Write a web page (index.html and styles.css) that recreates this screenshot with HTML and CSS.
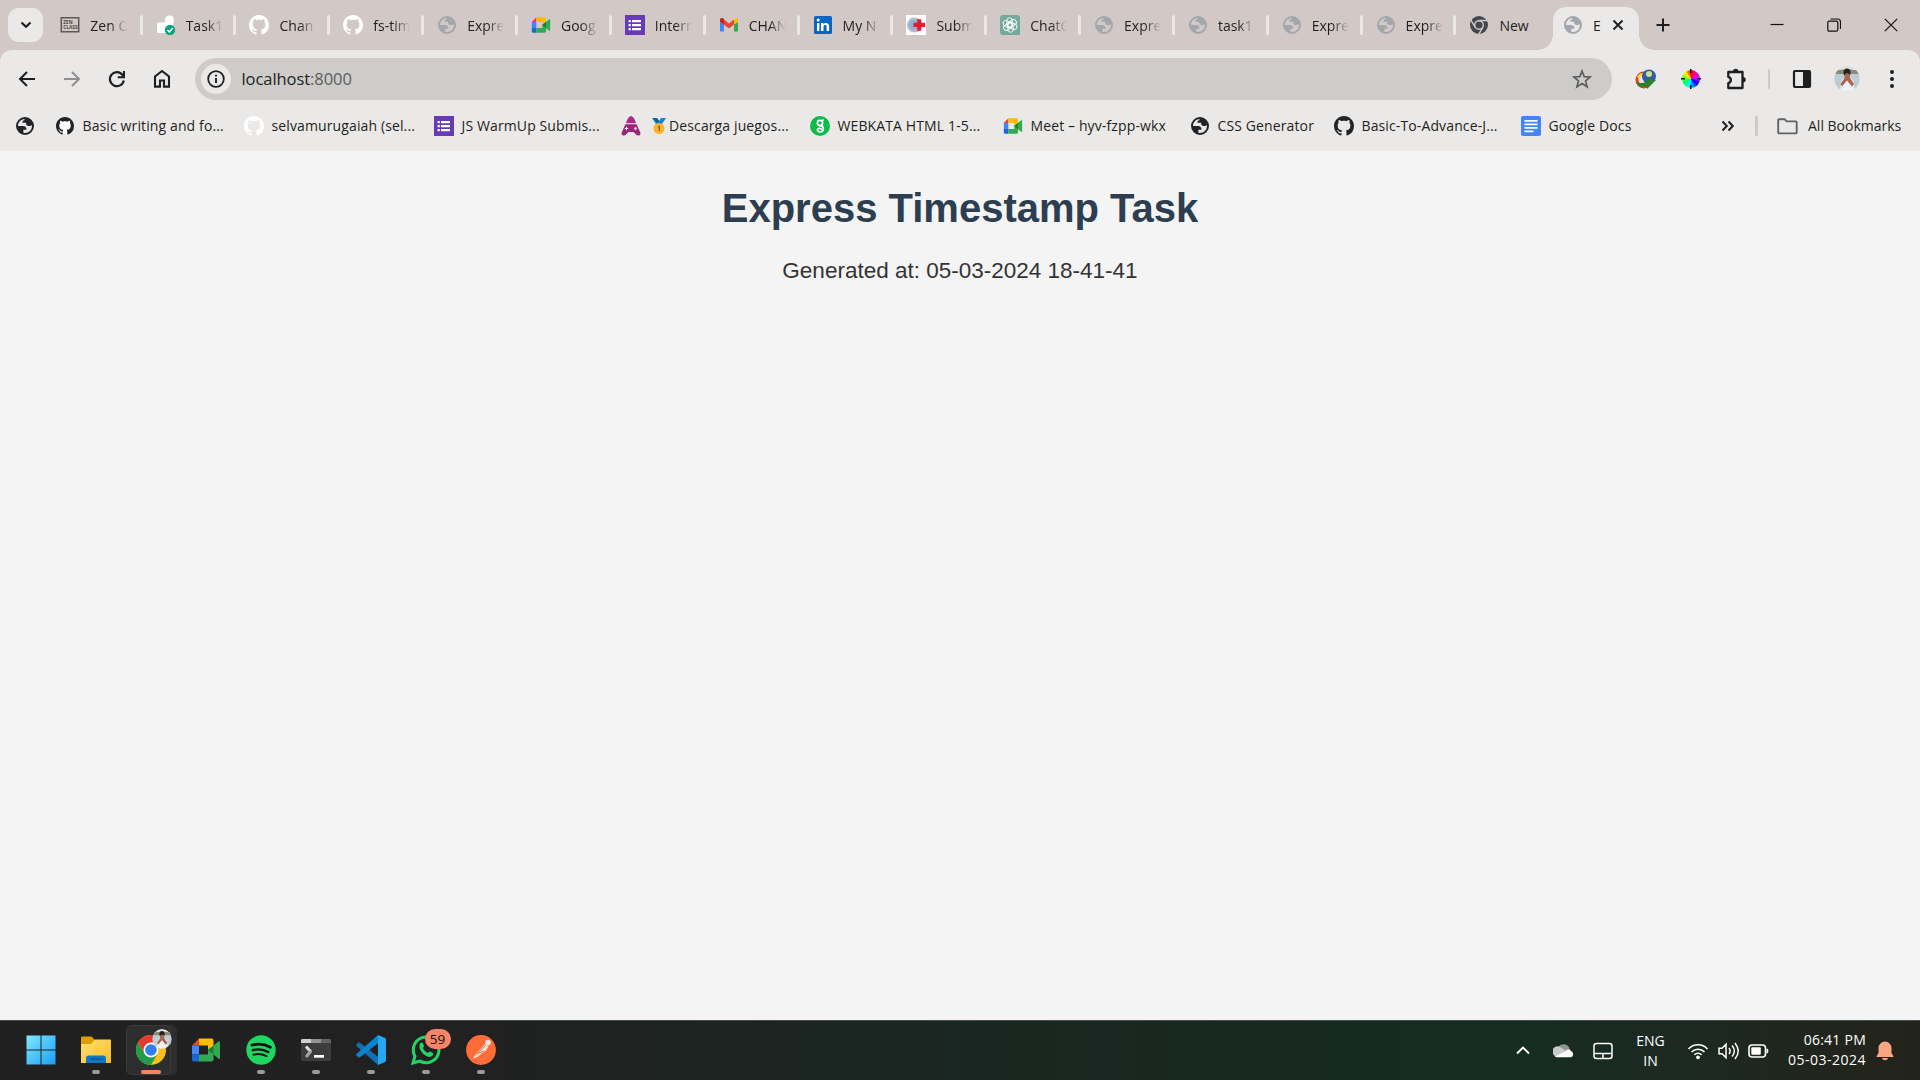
FILE: index.html
```html
<!DOCTYPE html>
<html lang="en">
<head>
<meta charset="utf-8">
<title>Express Timestamp Task</title>
<link rel="stylesheet" href="styles.css">
</head>
<body>
<svg class="defs" width="0" height="0" aria-hidden="true">
  <defs>
    <symbol id="globe" viewBox="0 0 16 16"><path fill="currentColor" fill-rule="evenodd" d="M8 .8a7.2 7.2 0 1 0 0 14.4A7.2 7.2 0 0 0 8 .8zM2.4 8h3.9c1.9 0 2.9 1 2.9 2.9H6.7v2.5c.4.1.9.2 1.3.2A5.6 5.6 0 0 0 13.6 8c0-.3 0-.6-.1-.9-.4.6-1 .9-1.900.9-1.900 0-2.800-.900-2.800-2.700H6c-.1-1.300.4-1.900 1.600-1.900V2.400C4.800 2.600 2.400 5 2.400 8z"/></symbol>
    <symbol id="github" viewBox="0 0 16 16"><path fill="currentColor" d="M8 0C3.58 0 0 3.58 0 8c0 3.54 2.29 6.53 5.47 7.59.4.07.55-.17.55-.38 0-.19-.01-.82-.01-1.49-2.01.37-2.53-.49-2.69-.94-.09-.23-.48-.94-.82-1.13-.28-.15-.68-.52-.01-.53.63-.01 1.08.58 1.23.82.72 1.21 1.87.87 2.33.66.07-.52.28-.87.51-1.07-1.78-.2-3.64-.89-3.64-3.95 0-.87.31-1.59.82-2.15-.08-.2-.36-1.02.08-2.12 0 0 .67-.21 2.2.82.64-.18 1.32-.27 2-.27.68 0 1.36.09 2 .27 1.53-1.04 2.2-.82 2.2-.82.44 1.1.16 1.92.08 2.12.51.56.82 1.27.82 2.15 0 3.07-1.87 3.75-3.65 3.95.29.25.54.73.54 1.48 0 1.07-.01 1.93-.01 2.2 0 .21.15.46.55.38A8.013 8.013 0 0 0 16 8c0-4.42-3.58-8-8-8z"/></symbol>
    <symbol id="meet" viewBox="0 0 28 24"><path fill="#ea4335" d="M0 7.500 7 .5v7z"/><path fill="#fbbc04" d="M7 .5h12.500a2 2 0 0 1 2 2V9l-5.500 4V7.500H7z"/><path fill="#4285f4" d="M0 7.500h7v9H0z"/><path fill="#1967d2" d="M0 16.500h7v7H2a2 2 0 0 1-2-2z"/><path fill="#34a853" d="M7 16.500h9V11l5.500 1v9.500a2 2 0 0 1-2 2H7zM16 12l10.300-8.500c.8-.6 1.700-.2 1.700.8v15.400c0 1-.9 1.400-1.700.8z"/><path fill="#188038" d="m16 12 5.500-4.600v9.200z"/></symbol>
    <symbol id="forms" viewBox="0 0 20 20"><path fill="#673ab7" d="M0 0h20v20H0z"/><path fill="#fff" d="M7 5h9v2.200H7zM7 9h9v2.200H7zM7 13h9v2.200H7zM3.600 5h2.200v2.200H3.600zM3.600 9h2.200v2.200H3.600zM3.600 13h2.200v2.200H3.600z"/></symbol>
    <symbol id="avatar" viewBox="0 0 26 26"><clipPath id="round"><circle cx="13" cy="13" r="12.600"/></clipPath><g clip-path="url(#round)"><path fill="#bccdd3" d="M0 0h26v26H0z"/><path fill="#dfe5e6" d="M0 0h26v5H0z"/><path fill="#8b8b78" d="M0 5c7-2 19-2 26 0v3H0z"/><path fill="#eef0f6" d="M6 26 7.500 14l4-3h4l4 4L21 26z"/><ellipse cx="13" cy="6.500" rx="3.500" ry="4" fill="#26211f"/><path fill="#a8664e" d="m11 8 2-1 2.500 1 .5 4 4 6-2 2.500-5-6-5 6L6.500 18l4-6z"/></g></symbol>
  </defs>
</svg>

<header class="browser">
  <div class="tabstrip">
    <button class="tab-search"><svg width="12" height="8" viewBox="0 0 12 8"><path d="m1.500 1.500 4.500 4.300 4.500-4.300" fill="none" stroke="#1d1f21" stroke-width="2.200"/></svg></button>
    <div class="tabs">
      <div class="tab first"><svg class="fav" viewBox="0 0 20 20"><path d="M1.300 2.800h17.400v14H1.300z" fill="none" stroke="#5c5858" stroke-width="1.500"/><text x="3.200" y="8.800" class="zen">ZEN</text><text x="3.200" y="14" class="zen">CLASS</text></svg><span>Zen C</span></div>
      <div class="tab"><svg class="fav" viewBox="0 0 20 20"><path fill="#fff" d="M1 9c0-1 .5-1.500 1.500-1.500H9V4l1-2 2-1.500h3l2.500 2L18 6l-1 3v9H1z"/><circle cx="14" cy="15" r="5.200" fill="#0aa37f"/><path d="m11.300 15 2 2 3.600-4" fill="none" stroke="#fff" stroke-width="1.500"/></svg><span>Task1</span></div>
      <div class="tab white"><svg class="fav"><use href="#github"/></svg><span>Chan</span></div>
      <div class="tab white"><svg class="fav"><use href="#github"/></svg><span>fs-tim</span></div>
      <div class="tab"><svg class="fav"><use href="#globe"/></svg><span>Expre</span></div>
      <div class="tab"><svg class="fav" viewBox="0 0 20 20"><use href="#meet" x=".5" y="2" width="19" height="16"/></svg><span>Goog</span></div>
      <div class="tab"><svg class="fav"><use href="#forms"/></svg><span>Intern</span></div>
      <div class="tab"><svg class="fav" viewBox="0 0 20 20"><path fill="#4285f4" d="M1 7v9.500h4V9.300z"/><path fill="#34a853" d="M15 9.300v7.200h4V7z"/><path fill="#ea4335" d="M1 4.500 3 3l7 5.500L15 4.500v5l-5 4-9-6.800z"/><path fill="#c5221f" d="M1 5c0-2 2-2.700 4-1v5.300L1 6.800z"/><path fill="#fbbc04" d="M15 4.500c2-2 4-1.500 4 .5v1.800l-4 2.900z"/></svg><span>CHAN</span></div>
      <div class="tab"><svg class="fav" viewBox="0 0 20 20"><rect x="1" y="1" width="18" height="18" rx="1.500" fill="#0a66c2"/><path fill="#fff" d="M4 8h2.400v8H4zM8 8h2.400v1.200c1.500-2.200 5.700-1.700 5.700 2V16h-2.500v-4.300c0-2.300-3.100-2.300-3.100 0V16H8z"/><circle cx="5.200" cy="5" r="1.500" fill="#fff"/></svg><span>My N</span></div>
      <div class="tab"><svg class="fav" viewBox="0 0 20 20"><path fill="#fff" d="M0 0h20v20H0z"/><circle cx="8.500" cy="10" r="6.500" fill="#82b8d8" stroke="#b8bcc1" stroke-width="2.200"/><path fill="#e31b2f" d="M11.200 4.200h4v3.600H19V12h-3.800v3.700h-4V12H7.500V7.800h3.700z"/></svg><span>Subm</span></div>
      <div class="tab"><svg class="fav" viewBox="0 0 20 20"><path fill="#74aa9c" d="M3 0h14a3 3 0 0 1 3 3v17H3a3 3 0 0 1-3-3V3a3 3 0 0 1 3-3z"/><g fill="none" stroke="#fff" stroke-width=".9"><rect id="petal" x="6.800" y="2.800" width="5.400" height="9.500" rx="2.700"/><use href="#petal" transform="rotate(60 10 10)"/><use href="#petal" transform="rotate(120 10 10)"/><use href="#petal" transform="rotate(180 10 10)"/><use href="#petal" transform="rotate(240 10 10)"/><use href="#petal" transform="rotate(300 10 10)"/></g></svg><span>ChatG</span></div>
      <div class="tab"><svg class="fav"><use href="#globe"/></svg><span>Expre</span></div>
      <div class="tab"><svg class="fav"><use href="#globe"/></svg><span>task1</span></div>
      <div class="tab"><svg class="fav"><use href="#globe"/></svg><span>Expre</span></div>
      <div class="tab"><svg class="fav"><use href="#globe"/></svg><span>Expre</span></div>
      <div class="tab last"><svg class="fav" viewBox="0 0 20 20"><circle cx="10" cy="10" r="9" fill="#41474c"/><g stroke="#d2c9c6" stroke-width="1.400" fill="none"><path d="M10 5.500h9M6.100 12.200 1.600 4.500M13.900 12.200l-4.400 7.500"/><circle cx="10" cy="10" r="4.300"/></g></svg><span>New</span></div>
      <div class="tab active"><svg class="fav"><use href="#globe"/></svg><span>E</span><svg class="close" width="12" height="12" viewBox="0 0 12 12"><path d="m1.500 1.500 9 9m0-9-9 9" stroke="#1d1f21" stroke-width="1.900"/></svg></div>
    </div>
    <svg class="new-tab" width="14" height="14" viewBox="0 0 14 14"><path d="M7 .5v13M.5 7h13" stroke="#1d1f21" stroke-width="2"/></svg>
    <div class="window-buttons">
      <svg width="14" height="14" viewBox="0 0 14 14"><path d="M.5 6.500h13" stroke="#111" stroke-width="1.200"/></svg>
      <svg width="14" height="14" viewBox="0 0 14 14"><g fill="none" stroke="#111" stroke-width="1.200"><rect x=".8" y="3.200" width="10" height="10" rx="1.500"/><path d="M3.500 1h7a3 3 0 0 1 3 3v7"/></g></svg>
      <svg width="14" height="14" viewBox="0 0 14 14"><path d="m.8.8 12.400 12.400m0-12.400L.8 13.200" stroke="#111" stroke-width="1.200"/></svg>
    </div>
  </div>

  <div class="toolbar">
    <div class="nav">
      <svg viewBox="0 0 20 20"><path d="M18 10H3.500M10 3l-7 7 7 7" fill="none" stroke="#1d1f21" stroke-width="2"/></svg>
      <svg viewBox="0 0 20 20"><path d="M2 10h14.500M10 3l7 7-7 7" fill="none" stroke="#919090" stroke-width="2"/></svg>
      <svg viewBox="0 0 20 20"><path d="M16.800 11.500A7 7 0 1 1 15.600 6L17 7.500" fill="none" stroke="#1d1f21" stroke-width="2.200"/><path d="M17 2v6.300h-6.300" fill="none" stroke="#1d1f21" stroke-width="2"/></svg>
      <svg viewBox="0 0 20 20"><path d="M3 17.600V7.500L10 2l7 5.500v10.100h-5V11.500H8v6.100z" fill="none" stroke="#1d1f21" stroke-width="2.100"/></svg>
    </div>
    <div class="omnibox">
      <span class="site-info"><svg width="18" height="18" viewBox="0 0 18 18"><circle cx="9" cy="9" r="7.800" fill="none" stroke="#1d1f21" stroke-width="1.800"/><path d="M9 8v5M9 4.800v1.800" stroke="#1d1f21" stroke-width="1.900"/></svg></span>
      <span class="url">localhost<span>:8000</span></span>
      <svg class="star" width="20" height="20" viewBox="0 0 20 20"><path d="m10 2 2.200 5.600 6 .4-4.600 3.900 1.500 5.900L10 14.500l-5.100 3.300 1.500-5.900L1.800 8l6-.4z" fill="none" stroke="#5f5f5f" stroke-width="1.700"/></svg>
    </div>
    <div class="extensions">
      <svg width="22" height="20" viewBox="0 0 22 20"><circle cx="9" cy="11" r="7" fill="none" stroke="#e33d22" stroke-width="3"/><path d="M3 8c3-5 8-3 9 0M3 9c2-4 6-3 7 1" fill="none" stroke="#f8d83d" stroke-width="2"/><circle cx="14" cy="7.500" r="7" fill="#315f9f"/><circle cx="14" cy="5" r="3" fill="#d4dc92"/><path fill="#278526" d="M1 13c5 2 10 1 12-2l-1-1 9 1-9 9v-3c-5 2-9 1-11-4z"/></svg>
      <span class="wheel"><i></i></span>
      <svg width="22" height="22" viewBox="0 0 22 22"><path fill="none" stroke="#1d1f21" stroke-width="2.300" stroke-linejoin="round" d="M3.300 4h14.200v16H3.300v-4.800c3.400-1 3.400-5.400 0-6.400z"/><path fill="#1d1f21" d="M8 3.500a2.700 2.700 0 0 1 5.400 0zM18 9a2.700 2.700 0 0 1 0 5.400z"/></svg>
      <i class="rule"></i>
      <svg width="20" height="20" viewBox="0 0 20 20"><rect x="2" y="2" width="16" height="16" rx="1" fill="none" stroke="#1d1f21" stroke-width="2.200"/><path fill="#1d1f21" d="M11 2h7v16h-7z"/></svg>
      <svg width="26" height="26"><use href="#avatar"/></svg>
      <svg width="6" height="20" viewBox="0 0 6 20" fill="#1d1f21"><circle cx="3" cy="3" r="2"/><circle cx="3" cy="10" r="2"/><circle cx="3" cy="17" r="2"/></svg>
    </div>
  </div>

  <nav class="bookmarks">
    <a class="dark"><svg class="fav"><use href="#globe"/></svg></a>
    <a class="dark"><svg class="fav" viewBox="0 0 20 20"><circle cx="10" cy="10" r="8.500" fill="#fff"/><use href="#github" x="1" y="1" width="18" height="18"/></svg><span>Basic writing and fo...</span></a>
    <a class="white"><svg class="fav"><use href="#github"/></svg><span>selvamurugaiah (sel...</span></a>
    <a><svg class="fav"><use href="#forms"/></svg><span>JS WarmUp Submis...</span></a>
    <a><svg class="fav" viewBox="0 0 20 20"><path fill="#b3278c" d="M5 7.500C6 3 8 .3 10 .3s4 2.700 5 7.200z"/><path fill="#9e2379" d="M4.500 8h11L19.500 17c0 3-3 3.300-4.500 1.500L12.500 16h-5L5 18.500C3.500 20.300.5 20 .5 17z"/><path fill="#fff" d="M4.500 7.400h11v.9h-11zM5 10.800h1v3.500H5zM3.800 12h3.500v1H3.800z"/><circle cx="14.500" cy="12.500" r="1.300" fill="#fff"/></svg><svg class="medal" width="16" height="18" viewBox="0 0 16 18"><path fill="#1786c8" d="M1 1h5l2 3 2-3h5l-4 6H5z"/><path fill="#0e5f9b" d="m6 1 2 3-2 2-4-5z"/><circle cx="8" cy="11.500" r="5.500" fill="#fbb42c"/><path d="M7 10.500 8.300 9.500V14" fill="none" stroke="#8c5a16" stroke-width="1.300"/></svg><span>Descarga juegos...</span></a>
    <a><svg class="fav" viewBox="0 0 20 20"><circle cx="10" cy="10" r="10" fill="#10b94c"/><g fill="none" stroke="#fff" stroke-width="1.700"><circle cx="10" cy="7" r="2.600"/><path d="M10 9.700c4.500 0 4.300 6.300.3 6.300-3.300 0-3.800-3.300-1.300-3.700 2-.3 2.500 1 1.700 1.600M12 5l1.500-1.500"/></g></svg><span>WEBKATA HTML 1-5...</span></a>
    <a><svg class="fav" viewBox="0 0 20 20"><use href="#meet" x=".5" y="2" width="19" height="16"/></svg><span>Meet – hyv-fzpp-wkx</span></a>
    <a class="dark"><svg class="fav"><use href="#globe"/></svg><span>CSS Generator</span></a>
    <a class="dark"><svg class="fav"><use href="#github"/></svg><span>Basic-To-Advance-J...</span></a>
    <a><svg class="fav" viewBox="0 0 20 20"><rect width="20" height="20" rx="2" fill="#4285f4"/><path fill="#fff" d="M3.500 4h13v1.800h-13zM3.500 7.500h13v1.800h-13zM3.500 11h13v1.800h-13zM3.500 14.500h9v1.800h-9z"/></svg><span>Google Docs</span></a>
    <svg width="14" height="12" viewBox="0 0 14 12"><path d="m1.500 1.500 4.300 4.500-4.300 4.500M7.500 1.500 11.800 6l-4.300 4.500" fill="none" stroke="#1d1f21" stroke-width="2"/></svg>
    <i class="rule"></i>
    <a class="all"><svg width="21" height="17" viewBox="0 0 21 17"><path d="M1.200 2.200c0-.6.400-1 1-1h5.300l2.200 2.200h9c.6 0 1 .4 1 1v10c0 .6-.4 1-1 1H2.200c-.6 0-1-.4-1-1z" fill="none" stroke="#5f6368" stroke-width="1.900"/></svg><span>All Bookmarks</span></a>
  </nav>
</header>

<main class="page">
  <h1>Express Timestamp Task</h1>
  <p>Generated at: 05-03-2024 18-41-41</p>
</main>

<footer class="taskbar">
  <div class="apps">
    <div class="app start"><svg viewBox="0 0 30 30"><defs><linearGradient id="win" x2="1" y2="1"><stop stop-color="#7eeaff"/><stop offset="1" stop-color="#1a9df5"/></linearGradient></defs><path fill="url(#win)" d="M.5.500h14v14H.5zM15.500.500h14v14h-14zM.5 15.500h14v14H.5zM15.500 15.500h14v14h-14z"/></svg></div>
    <div class="app open"><svg viewBox="0 0 30 30"><defs><linearGradient id="fold" x2="1" y2="1"><stop stop-color="#ffe071"/><stop offset="1" stop-color="#f9bd26"/></linearGradient></defs><path fill="#dd9d08" d="M0 3c0-1 .5-1.500 1.500-1.500h9L14 5v6H0z"/><path fill="url(#fold)" d="M0 9h10l4-4.500h15c.7 0 1 .3 1 1V28H0z"/><path fill="#0f77c4" d="M5 28v-5a2.500 2.500 0 0 1 2.500-2.500h15A2.500 2.500 0 0 1 25 23v5z"/><path d="M9 24h13" stroke="#084b82"/></svg></div>
    <div class="app open current"><i class="stack"></i><svg viewBox="0 0 30 30"><circle cx="15" cy="15" r="15" fill="#fbc116"/><path fill="#e33b2e" d="M2 7.500A15 15 0 0 1 28 7.500H15L8.500 18.800z"/><path fill="#239b4c" d="M2 7.500A15 15 0 0 0 15 30l6.500-11.200L15 22l-6.500-3.300z"/><circle cx="15" cy="15" r="7.500" fill="#fff"/><circle cx="15" cy="15" r="5.800" fill="#2f80ee"/></svg><svg class="profile" viewBox="0 0 26 26"><use href="#avatar" width="26" height="26"/></svg></div>
    <div class="app"><svg viewBox="0 0 30 30"><use href="#meet" x="1" y="3" width="28" height="24"/></svg></div>
    <div class="app open"><svg viewBox="0 0 30 30"><circle cx="15" cy="15" r="14.700" fill="#1ed760"/><g fill="none" stroke="#111" stroke-linecap="round"><path d="M6 10.200c6-1.700 13-1 18.300 2" stroke-width="2.800"/><path d="M6.800 15.200c5-1.500 11-.8 15.500 1.800" stroke-width="2.300"/><path d="M7.500 19.700c4.500-1.200 9-.6 13 1.500" stroke-width="1.900"/></g></svg></div>
    <div class="app open"><svg viewBox="0 0 30 30"><path fill="#3b3d3f" d="M0 8h30v16.500c0 .8-.7 1.500-1.500 1.500h-27C.7 26 0 25.300 0 24.500z"/><path fill="#d0d0d0" d="M1.500 4H10v4H0V5.500C0 4.700.7 4 1.500 4z"/><path fill="#929292" d="M10 4h10v4H10z"/><path fill="#656565" d="M20 4h8.500c.8 0 1.500.7 1.500 1.500V8H20z"/><path d="m5 11.500 5 5.500" stroke="#e0e0e0" stroke-width="3"/><path d="m10 16-5 6" stroke="#a5a5a5" stroke-width="3"/><path fill="#fff" d="M13 20h10v2.700H13z"/></svg></div>
    <div class="app open"><svg viewBox="0 0 30 30"><path fill="#0f70b7" d="M2.300 7.700.7 9.200c-.7.6-.7 1.300 0 2L22 30v-8.200L3.800 7.700c-.5-.4-1-.4-1.500 0z"/><path fill="#0c85d1" d="m2.300 22.300-1.600-1.500c-.7-.6-.7-1.300 0-2L22 0v8.200L3.800 22.300c-.5.4-1 .4-1.500 0z"/><path fill="#27a6f1" d="M22 0 28.500 2.800c1 .4 1.500 1 1.500 2v20.400c0 1-.5 1.600-1.500 2L22 30z"/></svg></div>
    <div class="app open"><svg viewBox="0 0 30 30"><path d="M2 28 4 21.200a12.800 12.800 0 1 1 5 4.900z" fill="none" stroke="#24d366" stroke-width="3"/><path fill="#24d366" d="M9 8.500c1-1.500 2.500-1.500 3 0l1 2.500c0 1-1.200 1.700-1 2.300 1 2 2.500 3.500 4.700 4.500.8.200 1.500-1.500 2.300-1.400l3 1.500c.7.500 0 4-4 4C12 21 6.500 13 9 8.500z"/></svg><b class="badge">59</b></div>
    <div class="app open"><svg viewBox="0 0 30 30"><circle cx="15" cy="15" r="14.900" fill="#ff6c37"/><circle cx="22" cy="7.600" r="2.800" fill="#f7e5de"/><path fill="#f9ddd2" d="m19 9 3.500 2.500-2.500 4-5 3.500-3.500 3-5 2 4-5.500z"/><path d="m20 10-9 9 7-3" fill="none" stroke="#d36a48" stroke-width=".8"/></svg></div>
  </div>
  <div class="tray">
    <svg width="14" height="9" viewBox="0 0 14 9"><path d="m1 7.500 6-6 6 6" fill="none" stroke="#fff" stroke-width="1.900"/></svg>
    <svg width="21" height="15" viewBox="0 0 21 15"><path fill="#8d9692" d="M5 8a6 6 0 0 1 11-4l1 4-8 3z"/><path fill="#c6cac8" d="M1 12a5 5 0 0 1 7-7.300L17 10l-7 4H4c-1.500 0-2.500-.8-3-2z"/><path fill="#fff" d="M2 13.200 13 8c1-2 4-2 5 0a3.400 3.400 0 0 1 0 6.300H4c-.800 0-1.500-.4-2-1.100z"/></svg>
    <svg width="20" height="18" viewBox="0 0 20 18"><g fill="none" stroke="#fff" stroke-width="1.500"><rect x="1" y="1.500" width="18" height="15" rx="2.500"/><path d="M1 11.500h18M10 11.500v5"/></g></svg>
    <div class="lang"><span>ENG</span><span>IN</span></div>
    <svg width="22" height="18" viewBox="0 0 22 18"><g fill="none" stroke="#fff" stroke-width="1.500"><path d="M1.500 7a13 13 0 0 1 19 0M4.500 10a9 9 0 0 1 13 0M7.300 12.800a5.200 5.200 0 0 1 7.400 0"/></g><circle cx="11" cy="15.300" r="1.900" fill="#fff"/></svg>
    <svg width="21" height="18" viewBox="0 0 21 18"><g fill="none" stroke="#fff" stroke-width="1.500"><path d="M1 6.200h3l4-4v13.600l-4-4H1zM11 6c1.500 2 1.500 4 0 6M14 3.500c3 3.500 3 7.500 0 11M17 1c4 5 4 11 0 16"/></g></svg>
    <svg width="21" height="14" viewBox="0 0 21 14"><rect x="1" y="1" width="16.500" height="12" rx="3" fill="none" stroke="#fff" stroke-width="1.600"/><rect x="3.300" y="3.300" width="9.500" height="7.400" rx="1" fill="#fff"/><path fill="#fff" d="M18.500 4.500c2.500 0 2.500 5 0 5z"/></svg>
    <div class="clock"><span class="time">06:41 PM</span><span class="date">05-03-2024</span></div>
    <svg width="18" height="20" viewBox="0 0 18 20"><path fill="#fba583" d="M2.500 7a6.500 6.500 0 0 1 13 0v5l1.800 3c.3.600 0 1-.6 1H1.300c-.6 0-.9-.4-.6-1l1.800-3zM6 17h6c-.5 3-5.500 3-6 0z"/></svg>
  </div>
</footer>
</body>
</html>
```
FILE: styles.css
```css
* { box-sizing: border-box; }

body {
  margin: 0;
  height: 1080px;
  display: flex;
  flex-direction: column;
  overflow: hidden;
  background: #f4f4f4;
  color: #1d1f21;
  font: 14px "Open Sans", "Noto Sans", sans-serif;
}

svg { display: block; flex: none; }
.defs { position: absolute; }
.fav { width: 20px; height: 20px; }
.dark { color: #202327; }
.white { color: #fff; }
.zen { font-size: 4.800px; font-weight: 700; fill: #4a4646; }

.browser { height: 151px; background: #d2c9c6; }

/* Tab strip */
.tabstrip { height: 50px; display: flex; align-items: center; padding-left: 8px; }
.tab-search {
  width: 35px; height: 34px; padding: 0; border: 0; border-radius: 11px;
  background: #ebe9e7; display: grid; place-items: center;
}
.tabs { display: flex; align-items: flex-end; height: 50px; margin-left: 5.800px; }
.tab {
  display: flex; align-items: center; height: 50px; width: 93.850px;
  padding-left: 13px; gap: 10px; color: #a1a7ad; position: relative;
}
.tab.first { padding-left: 11.500px; }
.tab.white { color: #fff; }
.tab span {
  flex: none; width: 37px; overflow: hidden; white-space: nowrap; color: #1d1f21;
  -webkit-mask-image: linear-gradient(90deg, #000 55%, transparent);
  mask-image: linear-gradient(90deg, #000 55%, transparent);
}
.tab::after {
  content: ""; width: 3px; height: 20px; border-radius: 2px;
  background: #ebe9e7; margin-left: auto;
}
.tab.last { width: 96.500px; }
.tab.last span { -webkit-mask-image: none; mask-image: none; }
.tab.last::after { display: none; }
.tab.active {
  width: 86px; height: 43px; padding: 0 0 7px 10px; border-radius: 13px 13px 0 0;
  background: #ebe9e7;
}
.tab.active span { width: 8px; margin-right: 3px; -webkit-mask-image: none; mask-image: none; }
.tab.active .close { margin-left: -1.500px; }
.tab.active::before, .tab.active::after {
  content: ""; position: absolute; bottom: 0; width: 15px; height: 15px;
  border-radius: 0; margin: 0;
}
.tab.active::before { left: -15px; background: radial-gradient(circle at 0 0, transparent 14.500px, #ebe9e7 15px); }
.tab.active::after { right: -15px; background: radial-gradient(circle at 100% 0, transparent 14.500px, #ebe9e7 15px); }
.new-tab { margin-left: 17px; }
.window-buttons { display: flex; gap: 43px; margin: 0 22px 0 auto; }

/* Toolbar */
.toolbar {
  height: 51px; display: flex; align-items: center; padding-top: 7px;
  background: #ebe9e7; border-radius: 12px 12px 0 0;
}
.nav { display: flex; gap: 25px; padding-left: 17px; width: 195px; }
.nav svg { width: 20px; height: 20px; }
.omnibox {
  width: 1417px; height: 42px; border-radius: 21px; background: #cdccca;
  display: flex; align-items: center; padding: 0 20px 0 6px;
}
.site-info {
  width: 30px; height: 30px; border-radius: 50%; background: #ebe9e7;
  display: grid; place-items: center;
}
.url { margin-left: 10.500px; font-size: 16.500px; letter-spacing: -.06px; padding-bottom: 1px; }
.url span { color: #5d5d5d; }
.star { margin-left: auto; }
.extensions {
  flex: 1; display: grid; justify-items: center; align-items: center;
  grid-template-columns: 45px 45px 45px 21px 45px 46px 44px; padding-left: 11px;
}
.wheel {
  width: 18px; height: 18px; border-radius: 50%; display: flex; align-items: center; justify-content: center;
  background: conic-gradient(red, #ff0080 8%, #c0f 22%, #00f 35%, #08f 45%, #0ff 55%, #0f6 68%, #8f0 80%, #ff0 88%, #f60 95%, red);
}
.wheel i {
  flex: none; width: 20px; height: 20px;
  background:
    linear-gradient(#111, #111) 50% 0 / 1.500px 4px,
    linear-gradient(#111, #111) 50% 100% / 1.500px 4px,
    linear-gradient(#111, #111) 0 50% / 4px 1.500px,
    linear-gradient(#111, #111) 100% 50% / 4px 1.500px;
  background-repeat: no-repeat;
}
.rule { width: 2px; height: 20px; background: #d2c9c6; border-radius: 1px; }

/* Bookmarks */
.bookmarks {
  height: 50px; background: #ebe9e7; display: grid; align-items: center;
  padding-left: 15px;
  grid-template-columns: 40px 189px 190px 187px 189px 193px 187px 144px 187px 200px 34px 22px auto;
}
.bookmarks a { display: flex; align-items: center; gap: 7.500px; }
.bookmarks span { color: #1d1f21; white-space: nowrap; letter-spacing: .12px; padding-bottom: 2px; }
.bookmarks .medal { margin: 0 -5px 0 2px; }
.bookmarks .rule { width: 3px; }
.bookmarks .all { gap: 10px; }
.bookmarks .all span { letter-spacing: 0; }

/* Page content */
.page { flex: 1; text-align: center; font-family: "Liberation Sans", Arial, sans-serif; padding-top: 34px; }
h1 { margin: 0; font-size: 40px; line-height: 46px; color: #2c3e50; }
p { margin: 26px 0 0; font-size: 22.500px; line-height: 27px; color: #333; }

/* Taskbar */
.taskbar {
  height: 60px; display: flex; justify-content: space-between; color: #fff;
  border-top: 1px solid #414d47;
  background: linear-gradient(90deg, #202020 0, #202120 25%, #1c2521 42%, #182821 60%, #162c22 79%, #1b2922 87%, #22251c 96%, #22241c);
}
.apps { display: flex; padding: 4px 0 0 14.500px; }
.app {
  width: 55px; height: 50px; position: relative;
  display: flex; flex-direction: column; align-items: center; padding-top: 10px;
}
.app.start { width: 54px; padding-right: 2px; }
.app > svg { width: 30px; height: 30px; }
.app.open::after { content: ""; width: 8px; height: 4px; border-radius: 2px; background: #9a9a9a; margin-top: 5px; }
.app.current::after { width: 20px; background: #f78468; }
.app.current {
  width: 51px; margin: 0 2px; border-radius: 6px; background: #2e2e2e;
}
.stack { position: absolute; left: 0; top: 0; width: 45px; height: 50px; border: 1px solid #3b3b3b; border-radius: 6px; }
.app > .profile { position: absolute; left: 26px; top: 4px; width: 20px; height: 20px; }
.badge {
  position: absolute; left: 26px; top: 4px; width: 26px; height: 20px; border-radius: 10px;
  background: #f78468; color: #16120f; font-weight: 400; font-size: 13.500px; line-height: 20px; text-align: center;
}
.tray {
  display: grid; align-items: center; justify-items: center;
  grid-template-columns: 40px 40px 39px 57px 37px 24px 36px 90px 38px 16px;
}
.lang, .clock { display: flex; flex-direction: column; font-size: 14px; line-height: 20px; text-align: center; }
.clock { text-align: right; justify-self: end; padding-bottom: 1px; }
.time { letter-spacing: .25px; }
.date { letter-spacing: .5px; }
```
